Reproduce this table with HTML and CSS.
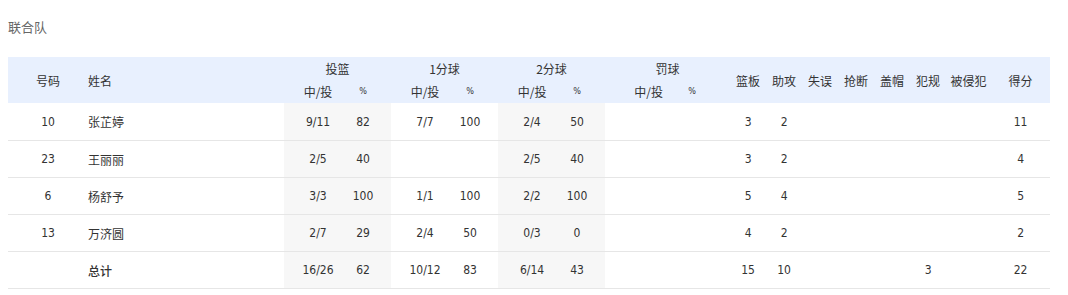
FILE: index.html
```html
<!DOCTYPE html>
<html lang="zh">
<head>
<meta charset="utf-8">
<link rel="stylesheet" href="styles.css">
</head>
<body>
<div class="wrap">
  <div class="title">联合队</div>
  <table class="stats">
    <colgroup>
      <col class="w-num"><col class="w-name">
      <col class="w-a"><col class="w-b">
      <col class="w-a"><col class="w-b">
      <col class="w-a"><col class="w-b">
      <col class="w-fa"><col class="w-fb">
      <col class="w-s"><col class="w-s"><col class="w-s"><col class="w-s"><col class="w-s"><col class="w-s">
      <col class="w-foul"><col class="w-pts">
    </colgroup>
    <thead>
      <tr>
        <th rowspan="2">号码</th>
        <th rowspan="2" class="left">姓名</th>
        <th colspan="2">投篮</th>
        <th colspan="2">1分球</th>
        <th colspan="2">2分球</th>
        <th colspan="2">罚球</th>
        <th rowspan="2">篮板</th>
        <th rowspan="2">助攻</th>
        <th rowspan="2">失误</th>
        <th rowspan="2">抢断</th>
        <th rowspan="2">盖帽</th>
        <th rowspan="2">犯规</th>
        <th rowspan="2">被侵犯</th>
        <th rowspan="2">得分</th>
      </tr>
      <tr class="sub">
        <th class="ca">中/投</th><th class="cb pct">%</th>
        <th class="ca">中/投</th><th class="cb pct">%</th>
        <th class="ca">中/投</th><th class="cb pct">%</th>
        <th class="fa">中/投</th><th class="fb pct">%</th>
      </tr>
    </thead>
    <tbody>
      <tr class="first">
        <td>10</td><td class="left name">张芷婷</td>
        <td class="ca shade">9/11</td><td class="cb shade">82</td>
        <td class="ca">7/7</td><td class="cb">100</td>
        <td class="ca shade">2/4</td><td class="cb shade">50</td>
        <td class="fa"></td><td class="fb"></td>
        <td>3</td><td>2</td><td></td><td></td><td></td><td></td><td></td><td>11</td>
      </tr>
      <tr>
        <td>23</td><td class="left name">王丽丽</td>
        <td class="ca shade">2/5</td><td class="cb shade">40</td>
        <td class="ca"></td><td class="cb"></td>
        <td class="ca shade">2/5</td><td class="cb shade">40</td>
        <td class="fa"></td><td class="fb"></td>
        <td>3</td><td>2</td><td></td><td></td><td></td><td></td><td></td><td>4</td>
      </tr>
      <tr>
        <td>6</td><td class="left name">杨舒予</td>
        <td class="ca shade">3/3</td><td class="cb shade">100</td>
        <td class="ca">1/1</td><td class="cb">100</td>
        <td class="ca shade">2/2</td><td class="cb shade">100</td>
        <td class="fa"></td><td class="fb"></td>
        <td>5</td><td>4</td><td></td><td></td><td></td><td></td><td></td><td>5</td>
      </tr>
      <tr>
        <td>13</td><td class="left name">万济圆</td>
        <td class="ca shade">2/7</td><td class="cb shade">29</td>
        <td class="ca">2/4</td><td class="cb">50</td>
        <td class="ca shade">0/3</td><td class="cb shade">0</td>
        <td class="fa"></td><td class="fb"></td>
        <td>4</td><td>2</td><td></td><td></td><td></td><td></td><td></td><td>2</td>
      </tr>
      <tr class="total">
        <td></td><td class="left name strong">总计</td>
        <td class="ca shade">16/26</td><td class="cb shade">62</td>
        <td class="ca">10/12</td><td class="cb">83</td>
        <td class="ca shade">6/14</td><td class="cb shade">43</td>
        <td class="fa"></td><td class="fb"></td>
        <td>15</td><td>10</td><td></td><td></td><td></td><td>3</td><td></td><td>22</td>
      </tr>
    </tbody>
  </table>
</div>
</body>
</html>
```
FILE: styles.css
```css
html, body {
  margin: 0;
  padding: 0;
  background: #ffffff;
}

.wrap {
  padding: 18px 18px 0 8px;
  font-family: "Noto Sans CJK SC", "Noto Sans", sans-serif;
  color: #333333;
}

.title {
  font-size: 13px;
  line-height: 18px;
  height: 18px;
  color: #666666;
  margin-bottom: 21px;
}

.stats {
  width: 1042px;
  table-layout: fixed;
  border-collapse: separate;
  border-spacing: 0;
  font-size: 12px;
}

.w-num { width: 80px; }
.w-name { width: 196px; }
.w-a { width: 68px; }
.w-b { width: 39px; }
.w-fa { width: 62px; }
.w-fb { width: 63px; }
.w-s { width: 36px; }
.w-foul { width: 45px; }
.w-pts { width: 59px; }

.stats th {
  background: #e8f0fe;
  font-weight: normal;
  font-size: 12px;
  color: #333333;
  height: 23px;
  padding: 0;
  line-height: 23px;
  text-align: center;
  white-space: nowrap;
}

.stats td {
  height: 36px;
  padding: 0;
  border-bottom: 1px solid #e6e6e6;
  text-align: center;
  font-family: "Liberation Sans Narrow", "DejaVu Sans Condensed", "Noto Sans CJK SC", sans-serif;
  font-size: 12px;
  color: #333333;
  white-space: nowrap;
}

.stats tr.first td {
  height: 37px;
}

.stats th.left,
.stats td.left {
  text-align: left;
}

.stats td.name {
  font-family: "Noto Sans CJK SC", sans-serif;
  font-size: 12px;
}

.stats td.strong {
  font-weight: 500;
}

.stats .cb {
  padding-right: 17px;
}

.stats .fa {
  padding-left: 25px;
}

.stats .fb {
  padding-right: 13px;
}

.stats th.pct {
  font-size: 9px;
  font-family: "Liberation Sans Narrow", "DejaVu Sans Condensed", sans-serif;
}

.stats td.shade {
  background: #f7f7f7;
}
```
